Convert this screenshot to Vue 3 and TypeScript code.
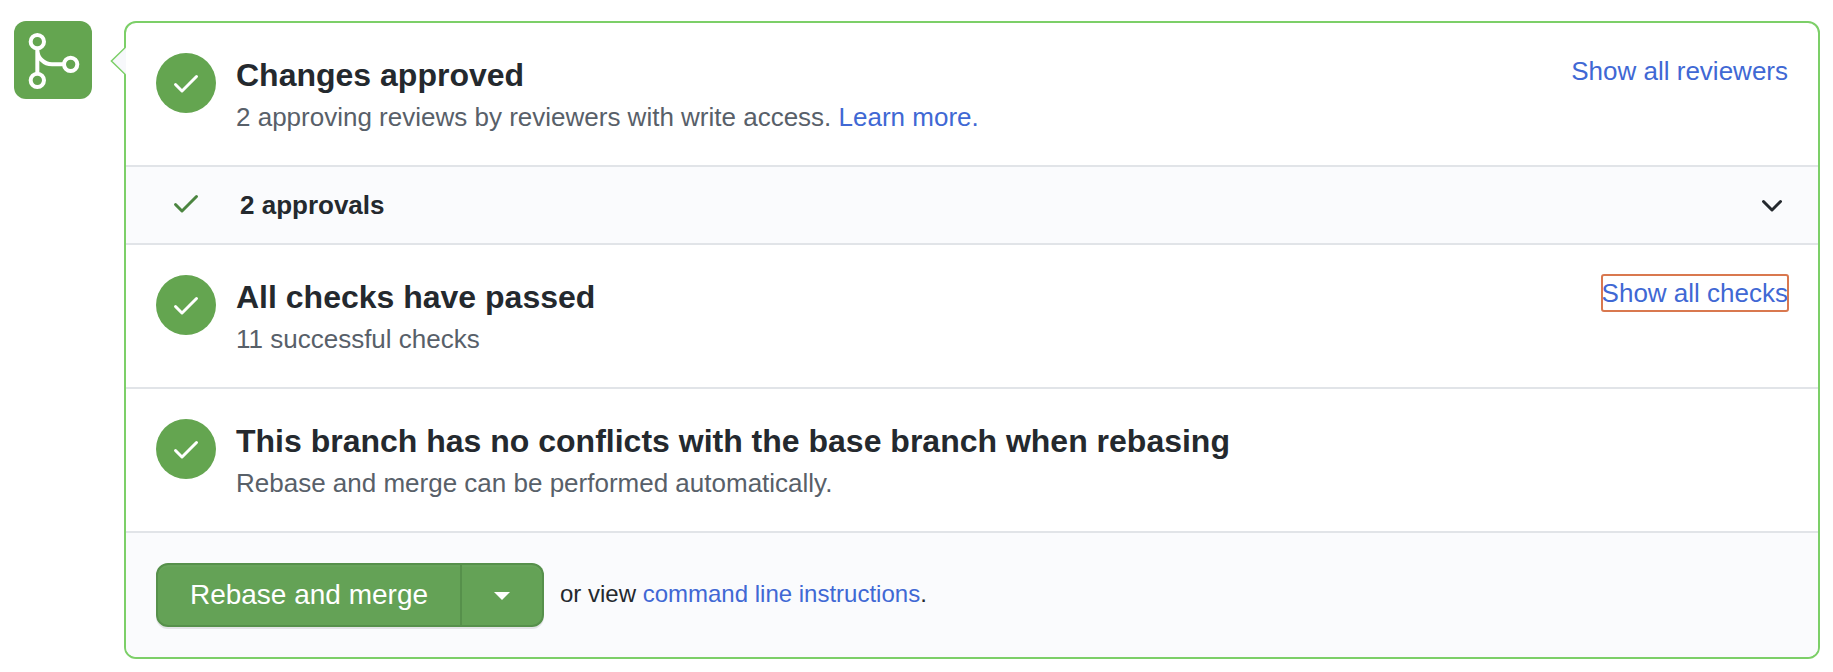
<script setup lang="ts">
interface StatusRow {
  title: string
  detail: string
  learnMore?: string
  action?: string
  focused?: boolean
  approvals?: string
}

const rows: StatusRow[] = [
  {
    title: 'Changes approved',
    detail: '2 approving reviews by reviewers with write access.',
    learnMore: 'Learn more.',
    action: 'Show all reviewers',
    approvals: '2 approvals',
  },
  {
    title: 'All checks have passed',
    detail: '11 successful checks',
    action: 'Show all checks',
    focused: true,
  },
  {
    title: 'This branch has no conflicts with the base branch when rebasing',
    detail: 'Rebase and merge can be performed automatically.',
  },
]

const checkPath =
  'M13.78 4.22a.75.75 0 010 1.06l-7.25 7.25a.75.75 0 01-1.06 0L2.22 9.28a.75.75 0 011.06-1.06L6 10.94l6.72-6.72a.75.75 0 011.06 0z'
const chevronPath =
  'M12.78 6.22a.75.75 0 010 1.06l-4.25 4.25a.75.75 0 01-1.06 0L3.22 7.28a.75.75 0 011.06-1.06L8 9.94l3.72-3.72a.75.75 0 011.06 0z'
</script>

<template>
  <main class="merge">
    <div class="badge">
      <svg class="badge-icon" viewBox="0 0 24 24" aria-hidden="true">
        <circle cx="5.75" cy="4.75" r="2.5" />
        <circle cx="5.75" cy="19.25" r="2.5" />
        <circle cx="18.25" cy="13.25" r="2.5" />
        <path d="M5.75 7.25v9.5M5.75 7.75a5.5 5.5 0 0 0 5.5 5.5h4.5" />
      </svg>
    </div>

    <section class="box">
      <svg class="pointer" viewBox="0 0 16 30" aria-hidden="true">
        <path class="pointer-fill" d="M16 1L1.5 15L16 29z" />
        <path class="pointer-line" d="M15.6 1.2L1.4 15L15.6 28.8" />
      </svg>

      <template v-for="row in rows" :key="row.title">
        <div class="row">
          <span class="disc">
            <svg class="icon" viewBox="0 0 16 16" aria-hidden="true"><path :d="checkPath" /></svg>
          </span>
          <div class="body">
            <h3 class="title">{{ row.title }}</h3>
            <p class="detail">
              {{ row.detail }}
              <a v-if="row.learnMore" class="link">{{ row.learnMore }}</a>
            </p>
          </div>
          <a v-if="row.action" class="link action" :class="{ focused: row.focused }">{{ row.action }}</a>
        </div>
        <div v-if="row.approvals" class="approvals">
          <svg class="icon approved" viewBox="0 0 16 16" aria-hidden="true"><path :d="checkPath" /></svg>
          <strong class="approvals-text">{{ row.approvals }}</strong>
          <svg class="icon chevron" viewBox="0 0 16 16" aria-hidden="true"><path :d="chevronPath" /></svg>
        </div>
      </template>

      <footer class="footer">
        <div class="button-group">
          <button class="btn btn-main" type="button">Rebase and merge</button>
          <button class="btn btn-caret" type="button" aria-label="Select merge method">
            <span class="caret"></span>
          </button>
        </div>
        <p class="hint">or view <a class="link">command line instructions</a>.</p>
      </footer>
    </section>
  </main>
</template>

<style>
body {
  background: #fff;
}
</style>

<style scoped>
.merge {
  box-sizing: border-box;
  display: flex;
  align-items: flex-start;
  gap: 32px;
  height: 672px;
  padding: 21px 13px 0 14px;
  font-family: 'Liberation Sans', Arial, sans-serif;
  color: #24292e;
}
.badge {
  box-sizing: border-box;
  flex: none;
  width: 78px;
  height: 78px;
  padding: 8px 0 0 8px;
  border-radius: 12px;
  background: #64a550;
}
.badge-icon {
  display: block;
  width: 64px;
  height: 64px;
  fill: none;
  stroke: #fff;
  stroke-width: 1.5;
}
.box {
  position: relative;
  box-sizing: border-box;
  flex: 1;
  height: 638px;
  border: 2px solid #7ccf68;
  border-radius: 12px;
}
.pointer {
  position: absolute;
  left: -16px;
  top: 23px;
  width: 16px;
  height: 30px;
}
.pointer-fill {
  fill: #f7f8fb;
}
.pointer-line {
  fill: none;
  stroke: #7ccf68;
  stroke-width: 1.5;
}
.row {
  box-sizing: border-box;
  display: flex;
  align-items: flex-start;
  height: 144px;
  padding: 30px 30px 0;
  border-bottom: 2px solid #e1e4e8;
}
.disc {
  display: flex;
  flex: none;
  align-items: center;
  justify-content: center;
  width: 60px;
  height: 60px;
  margin-right: 20px;
  border-radius: 50%;
  background: #64a550;
  color: #fff;
}
.icon {
  display: block;
  flex: none;
  width: 32px;
  height: 32px;
  fill: currentColor;
}
.body {
  flex: 1;
}
.title {
  margin: 0;
  font-size: 32px;
  line-height: 44px;
  font-weight: 700;
}
.detail {
  margin: 0;
  font-size: 26px;
  line-height: 40px;
  color: #586069;
}
.link {
  color: #4068d4;
}
.action {
  font-size: 26px;
  line-height: 36px;
}
.focused {
  outline: 2px solid #d9784f;
  outline-offset: -1px;
  border-radius: 2px;
}
.approvals {
  box-sizing: border-box;
  display: flex;
  align-items: flex-start;
  height: 78px;
  padding: 20px 30px 0 44px;
  border-bottom: 2px solid #e1e4e8;
  background: #fafbfd;
}
.approved {
  margin-right: 38px;
  color: #4b8540;
}
.approvals-text {
  flex: 1;
  font-size: 26px;
  line-height: 36px;
}
.chevron {
  margin-top: 1px;
}
.footer {
  display: flex;
  align-items: flex-start;
  height: 124px;
  border-radius: 0 0 10px 10px;
  background: #fafbfd;
}
.button-group {
  display: flex;
  margin: 30px 16px 0 30px;
  border-radius: 12px;
  box-shadow: 0 2px 0 rgba(27, 31, 35, 0.1);
}
.btn {
  box-sizing: border-box;
  height: 64px;
  margin: 0;
  border: 2px solid #56904b;
  background: #64a256;
  box-shadow: inset 0 2px 0 rgba(255, 255, 255, 0.03);
  color: #fff;
  font-family: inherit;
  font-size: 28px;
  line-height: 40px;
}
.btn-main {
  width: 306px;
  padding: 0;
  border-radius: 12px 0 0 12px;
}
.btn-caret {
  display: flex;
  align-items: center;
  justify-content: center;
  width: 82px;
  padding: 2px 0 0;
  border-left: 0;
  border-radius: 0 12px 12px 0;
}
.caret {
  border: 8px solid transparent;
  border-top-color: #fff;
  border-bottom-width: 0;
}
.hint {
  margin: 43px 0 0;
  font-size: 24px;
  line-height: 36px;
}
</style>
